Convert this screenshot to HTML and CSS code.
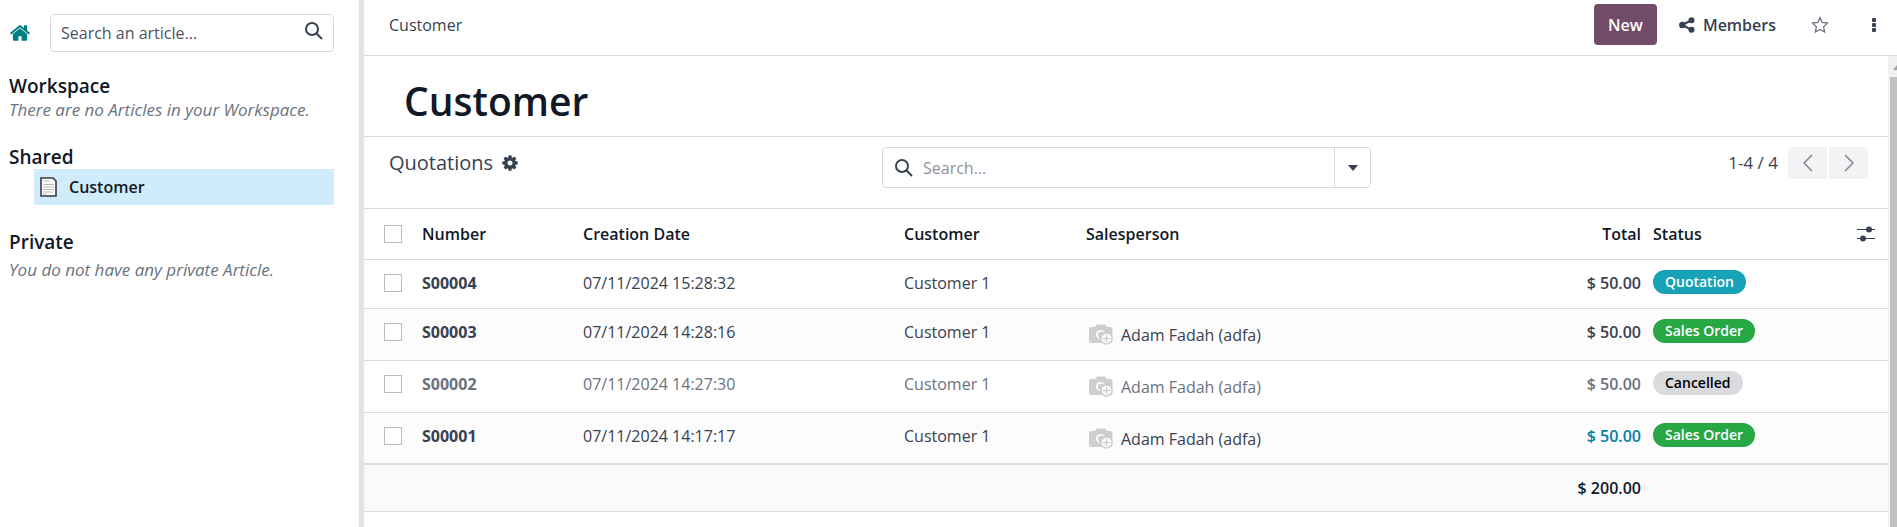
FILE: index.html
```html
<!DOCTYPE html>
<html lang="en">
  <head>
    <meta charset="UTF-8" />
    <meta name="viewport" content="width=device-width, initial-scale=1.0" />
    <title>Customer</title>
    <link rel="stylesheet" href="styles.css">
  </head>
  <body>
    <div class="app">
      <aside class="sidebar">
        <div class="sidebar-top">
          <a href="#" class="home" aria-label="Home">
            <svg width="22" height="22" viewBox="0 0 1792 1792" fill="currentColor"><path d="M1472 992v480q0 26-19 45t-45 19h-384v-384h-256v384h-384q-26 0-45-19t-19-45v-480q0-1 .5-3t.5-3l575-474 575 474q1 2 1 6zm223-69l-62 74q-8 9-21 11h-3q-13 0-21-7l-692-577-692 577q-12 8-24 7-13-2-21-11l-62-74q-8-10-7-23.5t11-21.5l719-599q32-26 76-26t76 26l244 204v-195q0-14 9-23t23-9h192q14 0 23 9t9 23v408l219 182q10 8 11 21.5t-7 23.5z"/></svg>
          </a>
          <div class="article-search">
            <input type="search" placeholder="Search an article..." aria-label="Search an article" />
            <svg width="18" height="18" viewBox="0 0 18 18" fill="none" stroke="currentColor" stroke-width="2"><circle cx="7" cy="7" r="6"/><path d="M11 11l6 6"/></svg>
          </div>
        </div>

        <section class="section">
          <h2>Workspace</h2>
          <p>There are no Articles in your Workspace.</p>
        </section>

        <section class="section">
          <h2>Shared</h2>
          <a href="#" class="article">
            <svg width="17" height="20" viewBox="0 0 17 20"><path d="M1 1h12l3 3v15H1z" fill="#fff" stroke="#3a3a3a" stroke-width="1.6"/><path d="M3 4h7M3 7.500h11M3 10h11M3 12.500h11M3 15h10M3 17h4" stroke="#bbb"/></svg>
            Customer
          </a>
        </section>

        <section class="section section-private">
          <h2>Private</h2>
          <p>You do not have any private Article.</p>
        </section>
      </aside>

      <main class="main">
        <header class="topbar">
          <span class="breadcrumb">Customer</span>
          <div class="actions">
            <button type="button" class="btn-new">New</button>
            <button type="button" class="btn-link">
              <svg width="16" height="16" viewBox="0 0 16 16" fill="currentColor"><path d="M3 8l10-5M3 8l10 5" stroke="currentColor" stroke-width="2"/><circle cx="3.300" cy="8" r="3.200"/><circle cx="12.500" cy="3.300" r="3"/><circle cx="12.500" cy="12.700" r="3"/></svg>
              Members
            </button>
            <button type="button" class="btn-icon" aria-label="Favorite">
              <svg width="18" height="18" viewBox="0 0 18 18" fill="none" stroke="#6b7280" stroke-width="1.300"><path d="M9 1.700l2.200 4.800 5.200.6-3.800 3.600 1 5.300L9 13.400 4.400 16l1-5.300L1.600 7.100l5.200-.6z"/></svg>
            </button>
            <button type="button" class="btn-icon" aria-label="More">
              <svg width="6" height="16" viewBox="0 0 6 16" fill="currentColor"><rect x="1" y="1" width="4" height="4" rx="1"/><rect x="1" y="6" width="4" height="4" rx="1"/><rect x="1" y="11" width="4" height="4" rx="1"/></svg>
            </button>
          </div>
        </header>

        <div class="body">
          <div class="content">
            <h1 class="title">Customer</h1>

            <div class="control-panel">
              <div class="view-name">
                Quotations
                <button type="button" class="btn-cog" aria-label="Actions">
                  <svg width="18" height="18" viewBox="0 0 1792 1792" fill="currentColor"><path d="M1152 896q0-106-75-181t-181-75-181 75-75 181 75 181 181 75 181-75 75-181zm512-109v222q0 12-8 23t-20 13l-185 28q-19 54-39 91 35 50 107 138 10 12 10 25t-9 23q-27 37-99 108t-94 71q-12 0-26-9l-138-108q-44 23-91 38-16 136-29 186-7 28-36 28h-222q-14 0-24.500-8.500t-11.500-21.500l-28-184q-49-16-90-37l-141 107q-10 9-25 9-14 0-25-11-126-114-165-168-7-10-7-23 0-12 8-23 15-21 51-66.500t54-70.500q-27-50-41-99l-183-27q-13-2-21-12.500t-8-23.500v-222q0-12 8-23t19-13l186-28q14-46 39-92-40-57-107-138-10-12-10-24 0-10 9-23 26-36 98.500-107.500t94.500-71.500q13 0 26 10l138 107q44-23 91-38 16-136 29-186 7-28 36-28h222q14 0 24.500 8.500t11.500 21.500l28 184q49 16 90 37l142-107q9-9 24-9 13 0 25 10 129 119 165 170 7 8 7 22 0 12-8 23-15 21-51 66.500t-54 70.500q26 50 41 98l183 28q13 2 21 12.500t8 23.500z"/></svg>
                </button>
              </div>
              <div class="record-search">
                <svg width="18" height="18" viewBox="0 0 18 18" fill="none" stroke="currentColor" stroke-width="2"><circle cx="7" cy="7" r="6"/><path d="M11 11l6 6"/></svg>
                <input type="search" placeholder="Search..." aria-label="Search quotations" />
                <button type="button" aria-label="Search options">
                  <svg width="10" height="6" viewBox="0 0 10 6" fill="currentColor"><path d="M0 0h10L5 6z"/></svg>
                </button>
              </div>
              <div class="pager">
                <span>1-4 / 4</span>
                <div class="pager-buttons">
                  <button type="button" aria-label="Previous">
                    <svg width="10" height="18" viewBox="0 0 10 18" fill="none" stroke="currentColor" stroke-width="1.500"><path d="M9 1L1 9l8 8"/></svg>
                  </button>
                  <button type="button" aria-label="Next">
                    <svg width="10" height="18" viewBox="0 0 10 18" fill="none" stroke="currentColor" stroke-width="1.500"><path d="M1 1l8 8-8 8"/></svg>
                  </button>
                </div>
              </div>
            </div>

            <table class="list">
              <colgroup>
                <col class="col-check" />
                <col class="col-number" />
                <col class="col-date" />
                <col class="col-customer" />
                <col />
                <col class="col-total" />
                <col class="col-status" />
                <col class="col-options" />
              </colgroup>
              <thead>
                <tr>
                  <th class="check"><input type="checkbox" aria-label="Select all" /></th>
                  <th>Number</th>
                  <th>Creation Date</th>
                  <th>Customer</th>
                  <th>Salesperson</th>
                  <th class="total">Total</th>
                  <th>Status</th>
                  <th class="options">
                    <button type="button" aria-label="Optional columns">
                      <svg width="18" height="16" viewBox="0 0 18 16" fill="currentColor"><path d="M0 3h18v1H0zM0 12h18v1H0z"/><circle cx="12" cy="3.500" r="3"/><circle cx="6" cy="12.500" r="3"/></svg>
                    </button>
                  </th>
                </tr>
              </thead>
              <tbody>
                <tr>
                  <td class="check"><input type="checkbox" aria-label="Select S00004" /></td>
                  <td class="number">S00004</td>
                  <td>07/11/2024 15:28:32</td>
                  <td>Customer 1</td>
                  <td></td>
                  <td class="total">$ 50.00</td>
                  <td colspan="2"><span class="badge badge-info">Quotation</span></td>
                </tr>
                <tr>
                  <td class="check"><input type="checkbox" aria-label="Select S00003" /></td>
                  <td class="number">S00003</td>
                  <td>07/11/2024 14:28:16</td>
                  <td>Customer 1</td>
                  <td>
                    <div class="person">
                      <svg class="avatar" viewBox="0 0 28 24"><use href="#camera"/></svg>
                      Adam Fadah (adfa)
                    </div>
                  </td>
                  <td class="total">$ 50.00</td>
                  <td colspan="2"><span class="badge badge-success">Sales Order</span></td>
                </tr>
                <tr class="muted">
                  <td class="check"><input type="checkbox" aria-label="Select S00002" /></td>
                  <td class="number">S00002</td>
                  <td>07/11/2024 14:27:30</td>
                  <td>Customer 1</td>
                  <td>
                    <div class="person">
                      <svg class="avatar" viewBox="0 0 28 24"><use href="#camera"/></svg>
                      Adam Fadah (adfa)
                    </div>
                  </td>
                  <td class="total">$ 50.00</td>
                  <td colspan="2"><span class="badge badge-default">Cancelled</span></td>
                </tr>
                <tr>
                  <td class="check"><input type="checkbox" aria-label="Select S00001" /></td>
                  <td class="number">S00001</td>
                  <td>07/11/2024 14:17:17</td>
                  <td>Customer 1</td>
                  <td>
                    <div class="person">
                      <svg class="avatar" viewBox="0 0 28 24"><use href="#camera"/></svg>
                      Adam Fadah (adfa)
                    </div>
                  </td>
                  <td class="total total-info">$ 50.00</td>
                  <td colspan="2"><span class="badge badge-success">Sales Order</span></td>
                </tr>
              </tbody>
              <tfoot>
                <tr>
                  <td colspan="5"></td>
                  <td class="total">$ 200.00</td>
                  <td colspan="2"></td>
                </tr>
              </tfoot>
            </table>
          </div>

          <div class="scrollbar">
            <svg width="9" height="21" viewBox="0 0 9 21"><path d="M9 9v5H5z" fill="#a3a3a3"/></svg>
            <div class="thumb"></div>
          </div>
        </div>
      </main>
    </div>

    <!-- avatar placeholder, reused in the salesperson column -->
    <svg class="sprite">
      <symbol id="camera" viewBox="0 0 28 24">
        <path d="M5 4h4l2-2.500h8L21 4h3q2.500 0 2.500 2v12q0 2-2.500 2H5q-2 0-2-2V6q0-2 2-2z" fill="#cdced0"/>
        <circle cx="14.500" cy="11.500" r="4.500" fill="#fff"/>
        <circle cx="15.500" cy="12" r="3.500" fill="#cdced0"/>
        <circle cx="20.500" cy="15.500" r="5.500" fill="#fff" stroke="#cdced0" stroke-width="1.500"/>
        <path d="M20.500 12v7M17 15.500h7" stroke="#cdced0" stroke-width="1.500"/>
      </symbol>
    </svg>
  </body>
</html>
```
FILE: styles.css
```css
* {
  box-sizing: border-box;
}
body {
  margin: 0;
  font-family: "Open Sans", "Noto Sans", sans-serif;
  font-size: 16px;
  line-height: 24px;
  color: #374151;
  background: #fff;
}
h1,
h2,
p {
  margin: 0;
}
svg {
  display: block;
  flex: none;
}
button {
  display: flex;
  align-items: center;
  justify-content: center;
  padding: 0;
  border: 0;
  background: none;
  font: inherit;
  color: inherit;
}
input {
  font: inherit;
  color: inherit;
}
a {
  color: inherit;
  text-decoration: none;
}
.sprite {
  display: none;
}
.app {
  display: flex;
  height: 100vh;
  overflow: hidden;
}

/* sidebar */
.sidebar {
  flex: none;
  width: 364px;
  padding: 14px 25px 0 9px;
  border-right: 5px solid #e2e3e5;
}
.sidebar-top {
  display: flex;
  align-items: center;
  gap: 19px;
}
.home {
  color: #017e84;
}
.article-search {
  flex: 1;
  display: flex;
  align-items: center;
  height: 38px;
  padding: 0 10px;
  border: 1px solid #d8dadd;
  border-radius: 4px;
}
.article-search svg {
  margin-bottom: 4px;
}
.article-search input,
.record-search input {
  flex: 1;
  min-width: 0;
  padding: 0;
  border: 0;
  outline: 0;
  background: none;
}
.article-search input::placeholder {
  color: #4b5260;
  opacity: 1;
}
.section {
  margin-top: 22px;
}
.section h2 {
  font-size: 19px;
  font-weight: 600;
  line-height: 24px;
  color: #111827;
}
.section p {
  font-size: 17px;
  font-style: italic;
  color: #6b7280;
}
.section + .section {
  margin-top: 23px;
}
.section + .section-private {
  margin-top: 25px;
}
.section-private p {
  margin-top: 4px;
}
.article {
  display: flex;
  align-items: center;
  gap: 12px;
  height: 36px;
  margin-left: 25px;
  padding-left: 6px;
  font-weight: 600;
  color: #111827;
  background: #d0ecfa;
}

/* top bar */
.main {
  flex: 1;
  min-width: 0;
  display: flex;
  flex-direction: column;
}
.topbar {
  display: flex;
  align-items: center;
  justify-content: space-between;
  padding: 4px 20px 10px 25px;
  border-bottom: 1px solid #d8dadd;
}
.actions {
  display: flex;
  align-items: center;
}
.btn-new {
  width: 63px;
  height: 41px;
  margin-right: 22px;
  border-radius: 4px;
  font-weight: 600;
  color: #fff;
  background: #714b67;
}
.btn-link {
  gap: 8px;
  margin-right: 35px;
  font-weight: 600;
}
.btn-icon + .btn-icon {
  margin-left: 42px;
}

.body {
  flex: 1;
  min-height: 0;
  display: flex;
}
.content {
  flex: 1;
  min-width: 0;
}
.title {
  padding: 21px 40px 11px;
  border-bottom: 1px solid #d8dadd;
  font-size: 39px;
  font-weight: 600;
  line-height: 48px;
  color: #111827;
}

/* control panel */
.control-panel {
  display: grid;
  grid-template-columns: repeat(3, 1fr);
  align-items: start;
  padding: 10px 20px 20px 25px;
}
.view-name {
  display: flex;
  align-items: center;
  gap: 8px;
  font-size: 20px;
  line-height: 32px;
}
.record-search {
  display: flex;
  align-items: center;
  max-width: 489px;
  height: 41px;
  padding-left: 12px;
  border: 1px solid #d8dadd;
  border-radius: 4px;
}
.record-search input {
  margin-left: 10px;
}
.record-search input::placeholder {
  color: #8f939b;
  opacity: 1;
}
.record-search button {
  width: 36px;
  height: 100%;
  border-left: 1px solid #d8dadd;
}
.pager {
  display: flex;
  align-items: center;
  justify-content: flex-end;
  gap: 10px;
  font-size: 17px;
}
.pager-buttons {
  display: flex;
  gap: 2px;
  border-radius: 5px;
  overflow: hidden;
}
.pager-buttons button {
  width: 39px;
  height: 32px;
  color: #7f838a;
  background: #f2f3f5;
}

/* list */
.list {
  width: 100%;
  table-layout: fixed;
  border-collapse: separate;
  border-spacing: 0;
}
.col-check {
  width: 52px;
}
.col-number {
  width: 161px;
}
.col-date {
  width: 321px;
}
.col-customer {
  width: 182px;
}
.col-total {
  width: 112px;
}
.col-status {
  width: 198px;
}
.col-options {
  width: 43px;
}
.list th,
.list td {
  padding: 11px 6px 13px;
  border-bottom: 1px solid #d8dadd;
  text-align: left;
  vertical-align: top;
}
.list th {
  padding: 13px 6px;
  border-top: 1px solid #d8dadd;
  font-weight: 600;
  color: #111827;
}
.list .check {
  padding-left: 20px;
}
.check input {
  appearance: none;
  display: block;
  width: 18px;
  height: 18px;
  margin: 3px 0;
  border: 1px solid #b9bcc1;
  background: #fff;
}
.list .number {
  font-weight: 700;
}
.list .total {
  text-align: right;
  font-weight: 600;
}
.list .total-info {
  color: #017ea8;
}
.list tbody tr:nth-child(even) {
  background: #fcfcfc;
}
.list .muted {
  color: #6b7280;
}
.list tbody tr:last-child td {
  padding-bottom: 12px;
  border-bottom: 2px solid #d8dadd;
}
.list tfoot td {
  padding-bottom: 11px;
  color: #111827;
  background: #f9fafb;
}
.options button {
  height: 24px;
  margin-left: 6px;
  color: #374151;
}
.person {
  display: flex;
  align-items: center;
  gap: 7px;
  padding-top: 3px;
}
.avatar {
  width: 28px;
  height: 24px;
}
.badge {
  display: block;
  width: fit-content;
  padding: 0 12px;
  border-radius: 12px;
  margin-top: -1px;
  font-size: 14px;
  font-weight: 600;
  line-height: 24px;
}
.badge-info {
  color: #fff;
  background: #17a2b8;
}
.badge-success {
  color: #fff;
  background: #28a745;
}
.badge-default {
  color: #000;
  background: #dadbdf;
}

/* scrollbar beside the article */
.scrollbar {
  flex: none;
  width: 9px;
  display: flex;
  flex-direction: column;
  background: #f1f1f1;
}
.thumb {
  flex: 1;
  margin-left: 2px;
  background: #c1c1c1;
}
```
